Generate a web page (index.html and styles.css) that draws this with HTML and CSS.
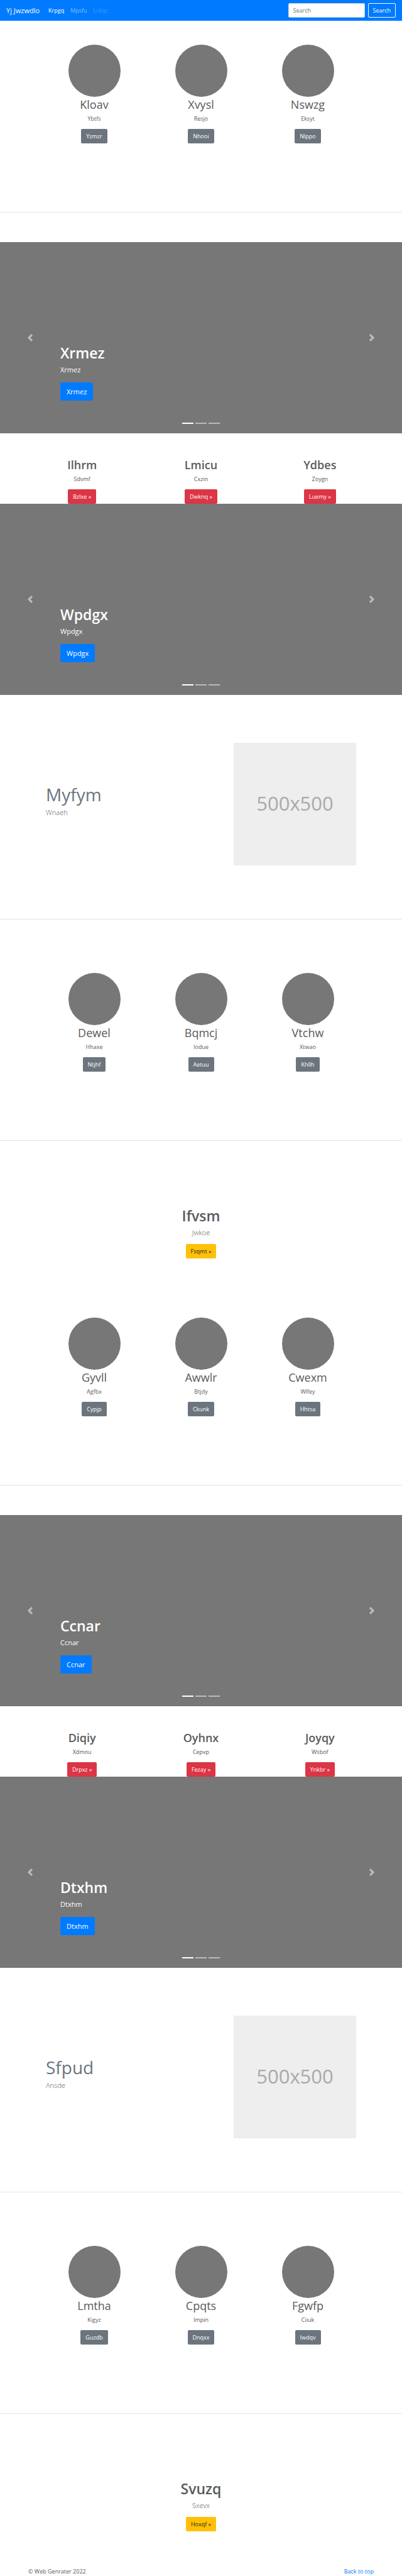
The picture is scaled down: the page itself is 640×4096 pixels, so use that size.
FILE: index.html
```html
<!DOCTYPE html>
<html lang="en">
<head>
<meta charset="utf-8">
<meta name="viewport" content="width=device-width, initial-scale=1">
<title>Yj Jwzwdlo</title>
<link rel="stylesheet" href="styles.css">
</head>
<body id="top">
<svg class="sprite" aria-hidden="true">
  <symbol id="prev" viewBox="0 0 8 8"><path d="M5.25 0l-4 4 4 4 1.5-1.5-2.5-2.5 2.5-2.5-1.5-1.5z"/></symbol>
  <symbol id="next" viewBox="0 0 8 8"><path d="M2.75 0l-1.5 1.5 2.5 2.5-2.5 2.5 1.5 1.5 4-4-4-4z"/></symbol>
</svg>

<header>
  <nav class="navbar">
    <a class="brand" href="#">Yj Jwzwdlo</a>
    <div class="nav-links">
      <a class="nav-link active" href="#">Krpgq</a>
      <a class="nav-link" href="#">Mpsfu</a>
      <a class="nav-link disabled" href="#">Lrkqc</a>
    </div>
    <form class="search">
      <input class="search-input" type="search" placeholder="Search" aria-label="Search">
      <button class="btn btn-outline" type="button">Search</button>
    </form>
  </nav>
</header>

<main>
  <section class="profiles profiles-first">
    <article class="card"><div class="avatar"></div><h2 class="name">Kloav</h2><p class="note">Ybtfs</p><a class="btn btn-secondary" href="#">Yzmzr</a></article>
    <article class="card"><div class="avatar"></div><h2 class="name">Xvysl</h2><p class="note">Resjo</p><a class="btn btn-secondary" href="#">Nhooi</a></article>
    <article class="card"><div class="avatar"></div><h2 class="name">Nswzg</h2><p class="note">Eksyt</p><a class="btn btn-secondary" href="#">Nlppo</a></article>
  </section>
  <hr class="divider divider-spaced">

  <section class="carousel">
    <div class="caption"><h1 class="title">Xrmez</h1><p class="caption-text">Xrmez</p><a class="btn btn-primary" href="#">Xrmez</a></div>
    <button class="control control-prev" type="button" aria-label="Previous"><svg class="arrow"><use href="#prev"/></svg></button>
    <button class="control control-next" type="button" aria-label="Next"><svg class="arrow"><use href="#next"/></svg></button>
    <div class="indicators"><span class="dot current"></span><span class="dot"></span><span class="dot"></span></div>
  </section>

  <section class="features">
    <article class="card"><h2 class="name strong">Ilhrm</h2><p class="note">Sdvmf</p><a class="btn btn-danger" href="#">Bzlxe »</a></article>
    <article class="card"><h2 class="name strong">Lmicu</h2><p class="note">Cxzin</p><a class="btn btn-danger" href="#">Dwknq »</a></article>
    <article class="card"><h2 class="name strong">Ydbes</h2><p class="note">Zoygn</p><a class="btn btn-danger" href="#">Luemy »</a></article>
  </section>

  <section class="carousel">
    <div class="caption"><h1 class="title">Wpdgx</h1><p class="caption-text">Wpdgx</p><a class="btn btn-primary" href="#">Wpdgx</a></div>
    <button class="control control-prev" type="button" aria-label="Previous"><svg class="arrow"><use href="#prev"/></svg></button>
    <button class="control control-next" type="button" aria-label="Next"><svg class="arrow"><use href="#next"/></svg></button>
    <div class="indicators"><span class="dot current"></span><span class="dot"></span><span class="dot"></span></div>
  </section>

  <section class="featurette">
    <div><h2 class="featurette-title">Myfym</h2><p class="lead">Wnaeh</p></div>
    <div class="placeholder">500x500</div>
  </section>
  <hr class="divider">

  <section class="profiles">
    <article class="card"><div class="avatar"></div><h2 class="name">Dewel</h2><p class="note">Hhaxe</p><a class="btn btn-secondary" href="#">Ntjhf</a></article>
    <article class="card"><div class="avatar"></div><h2 class="name">Bqmcj</h2><p class="note">Iodue</p><a class="btn btn-secondary" href="#">Aetuu</a></article>
    <article class="card"><div class="avatar"></div><h2 class="name">Vtchw</h2><p class="note">Xtwao</p><a class="btn btn-secondary" href="#">Khllh</a></article>
  </section>
  <hr class="divider">

  <section class="jumbo">
    <h1 class="title">Ifvsm</h1><p class="lead">Jwkoe</p><a class="btn btn-warning" href="#">Fsqmt »</a>
  </section>

  <section class="profiles profiles-after-jumbo">
    <article class="card"><div class="avatar"></div><h2 class="name">Gyvll</h2><p class="note">Agfbx</p><a class="btn btn-secondary" href="#">Cypjp</a></article>
    <article class="card"><div class="avatar"></div><h2 class="name">Awwlr</h2><p class="note">Btjdy</p><a class="btn btn-secondary" href="#">Ckunk</a></article>
    <article class="card"><div class="avatar"></div><h2 class="name">Cwexm</h2><p class="note">Wlfey</p><a class="btn btn-secondary" href="#">Hhtsa</a></article>
  </section>
  <hr class="divider divider-spaced">

  <section class="carousel">
    <div class="caption"><h1 class="title">Ccnar</h1><p class="caption-text">Ccnar</p><a class="btn btn-primary" href="#">Ccnar</a></div>
    <button class="control control-prev" type="button" aria-label="Previous"><svg class="arrow"><use href="#prev"/></svg></button>
    <button class="control control-next" type="button" aria-label="Next"><svg class="arrow"><use href="#next"/></svg></button>
    <div class="indicators"><span class="dot current"></span><span class="dot"></span><span class="dot"></span></div>
  </section>

  <section class="features">
    <article class="card"><h2 class="name strong">Diqiy</h2><p class="note">Xdmou</p><a class="btn btn-danger" href="#">Drpxz »</a></article>
    <article class="card"><h2 class="name strong">Oyhnx</h2><p class="note">Cepvp</p><a class="btn btn-danger" href="#">Fezay »</a></article>
    <article class="card"><h2 class="name strong">Joyqy</h2><p class="note">Wsbof</p><a class="btn btn-danger" href="#">Ynkbr »</a></article>
  </section>

  <section class="carousel">
    <div class="caption"><h1 class="title">Dtxhm</h1><p class="caption-text">Dtxhm</p><a class="btn btn-primary" href="#">Dtxhm</a></div>
    <button class="control control-prev" type="button" aria-label="Previous"><svg class="arrow"><use href="#prev"/></svg></button>
    <button class="control control-next" type="button" aria-label="Next"><svg class="arrow"><use href="#next"/></svg></button>
    <div class="indicators"><span class="dot current"></span><span class="dot"></span><span class="dot"></span></div>
  </section>

  <section class="featurette">
    <div><h2 class="featurette-title">Sfpud</h2><p class="lead">Ansde</p></div>
    <div class="placeholder">500x500</div>
  </section>
  <hr class="divider">

  <section class="profiles">
    <article class="card"><div class="avatar"></div><h2 class="name">Lmtha</h2><p class="note">Kigyz</p><a class="btn btn-secondary" href="#">Guzdb</a></article>
    <article class="card"><div class="avatar"></div><h2 class="name">Cpqts</h2><p class="note">Impin</p><a class="btn btn-secondary" href="#">Dnqxx</a></article>
    <article class="card"><div class="avatar"></div><h2 class="name">Fgwfp</h2><p class="note">Ciiuk</p><a class="btn btn-secondary" href="#">Iwdqv</a></article>
  </section>
  <hr class="divider">

  <section class="jumbo">
    <h1 class="title">Svuzq</h1><p class="lead">Sxevx</p><a class="btn btn-warning" href="#">Hoxqf »</a>
  </section>
</main>

<footer class="footer">
  <p class="copyright">© Web Genrater 2022</p>
  <a class="to-top" href="#top">Back to top</a>
</footer>
</body>
</html>
```
FILE: styles.css
```css
* {
  box-sizing: border-box;
}

body {
  margin: 0;
  background: #fff;
  color: #5a5a5a;
  font-family: "Open Sans", "Noto Sans", sans-serif;
  font-size: 9px;
  line-height: 14px;
}

h1, h2, p {
  margin: 0;
}

a {
  text-decoration: none;
}

.sprite {
  display: none;
}

/* Navigation */
.navbar {
  display: flex;
  align-items: center;
  padding: 5px 10px;
  background: #007bff;
}

.brand {
  margin-right: 9px;
  color: #fff;
  font-size: 11px;
  line-height: 18px;
}

.nav-links {
  display: flex;
  flex: 1;
}

.nav-link {
  padding: 0 5px;
  color: rgba(255, 255, 255, 0.5);
}

.nav-link.active {
  color: #fff;
}

.nav-link.disabled {
  color: rgba(255, 255, 255, 0.25);
}

.search {
  display: flex;
  gap: 5px;
}

.search-input {
  width: 122px;
  height: 23px;
  padding: 0 7px;
  border: 1px solid #ced4da;
  border-radius: 2px;
  background: #fff;
  color: #495057;
  font: inherit;
}

.search-input::placeholder {
  color: #6c757d;
  opacity: 1;
}

/* Buttons */
.btn {
  display: inline-block;
  padding: 4px 7px;
  border: 1px solid transparent;
  border-radius: 2px;
  background: transparent;
  color: #fff;
  font: inherit;
  line-height: 13px;
  text-align: center;
}

.btn-outline {
  border-color: #f8f9fa;
}

.btn-secondary {
  background: #6c757d;
}

.btn-danger {
  background: #dc3545;
}

.btn-warning {
  background: #ffc107;
  color: #212529;
}

.btn-primary {
  padding: 5px 9px;
  border-radius: 3px;
  background: #007bff;
  font-size: 11px;
  line-height: 17px;
}

/* Three-column rows */
.profiles,
.features {
  display: grid;
  grid-template-columns: repeat(3, 1fr);
}

.profiles {
  padding: 85px 65px 109px;
}

.profiles-first {
  padding-top: 38px;
}

.profiles-after-jumbo {
  padding-top: 94px;
}

.features {
  padding: 38px 36px 0;
}

.card {
  display: flex;
  flex-direction: column;
  align-items: center;
}

.avatar {
  width: 83px;
  height: 83px;
  border-radius: 50%;
  background: #777;
}

.name {
  margin-bottom: 3px;
  font-size: 18px;
  font-weight: 400;
  line-height: 25px;
}

.name.strong {
  font-weight: 600;
}

.note {
  margin-bottom: 9px;
}

.divider {
  height: 1px;
  margin: 0;
  border: 0;
  background: #e5e5e5;
}

.divider-spaced {
  margin-bottom: 47px;
}

/* Carousel */
.carousel {
  position: relative;
  display: flex;
  flex-direction: column;
  justify-content: flex-end;
  min-height: 304px;
  padding: 0 15% 52px;
  background: #777;
  color: #fff;
}

.title {
  margin-bottom: 3px;
  font-size: 23px;
  font-weight: 600;
  line-height: 30px;
}

.caption-text {
  margin-bottom: 12px;
  font-size: 11px;
  line-height: 17px;
}

.control {
  position: absolute;
  top: 0;
  bottom: 0;
  display: flex;
  align-items: center;
  justify-content: center;
  width: 15%;
  padding: 0;
  border: 0;
  background: none;
  opacity: 0.5;
}

.control-prev {
  left: 0;
}

.control-next {
  right: 0;
}

.arrow {
  width: 12px;
  height: 12px;
  fill: #fff;
}

.indicators {
  position: absolute;
  right: 0;
  bottom: 15px;
  left: 0;
  display: flex;
  gap: 3px;
  justify-content: center;
}

.dot {
  width: 18px;
  height: 2px;
  background: #fff;
  opacity: 0.5;
}

.dot.current {
  opacity: 1;
}

/* Featurette */
.featurette {
  display: flex;
  align-items: center;
  justify-content: space-between;
  padding: 76px 73px 85px;
}

.featurette-title {
  margin-bottom: 5px;
  color: #6c757d;
  font-size: 28px;
  font-weight: 400;
  line-height: 30px;
}

.lead {
  margin-bottom: 9px;
  font-size: 11px;
  font-weight: 300;
  line-height: 18px;
}

.placeholder {
  display: flex;
  align-items: center;
  justify-content: center;
  width: 195px;
  height: 195px;
  padding-bottom: 4px;
  background: #eee;
  color: #aaa;
  font-size: 31px;
  line-height: 42px;
}

/* Centered call to action */
.jumbo {
  padding-top: 104px;
  text-align: center;
}

.jumbo .btn {
  vertical-align: top;
}

.footer {
  display: flex;
  justify-content: space-between;
  padding: 57px 45px 0;
}

.to-top {
  color: #007bff;
}
```
